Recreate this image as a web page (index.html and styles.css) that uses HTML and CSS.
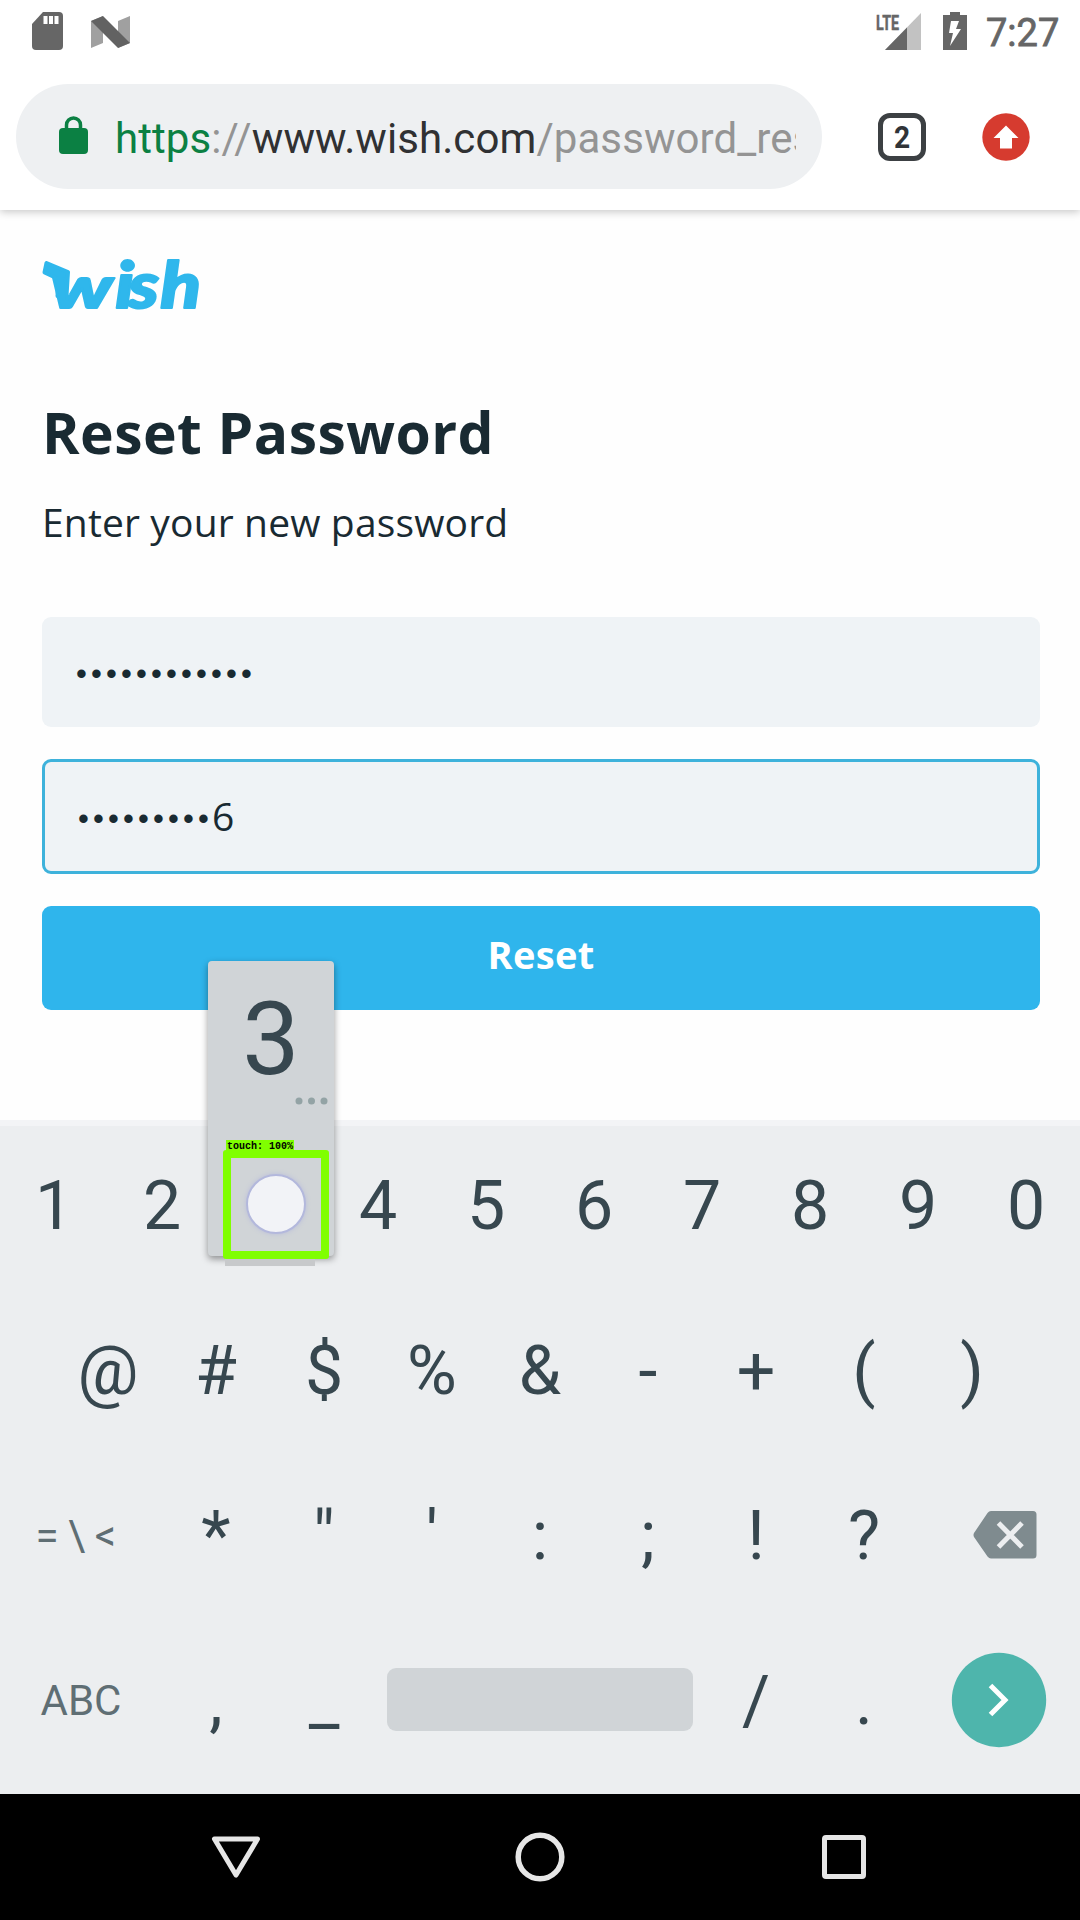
FILE: index.html
```html
<!DOCTYPE html>
<html lang="en">
<head>
<meta charset="utf-8">
<title>Reset Password</title>
<link rel="stylesheet" href="styles.css">
</head>
<body>
<div class="phone">
  <header class="browser">
    <div class="status">
      <svg class="sd" width="31" height="38" viewBox="0 0 31 38"><path d="M11 0H27a4 4 0 0 1 4 4V34a4 4 0 0 1-4 4H4a4 4 0 0 1-4-4V12Z" fill="#666"/><path d="M11.500 4h4v8h-4zM17 4h4v8h-4zM22.500 4h4v8h-4z" fill="#fff"/></svg>
      <svg class="nougat" width="39" height="32" viewBox="0 0 39 32"><path d="M0 5L12 0V27L0 32ZM27 5L39 0V27L27 32Z" fill="#a0a0a0"/><path d="M0 5L12 0L39 27L27 32Z" fill="#626262"/></svg>
      <svg class="signal" width="46" height="38" viewBox="0 0 46 38"><path d="M45 0V37H9Z" fill="#c2c2c2"/><path d="M31 14.500V37H9Z" fill="#666"/><text x="0" y="16.500" textLength="23" lengthAdjust="spacingAndGlyphs" class="lte">LTE</text></svg>
      <svg class="battery" width="24" height="38" viewBox="0 0 24 38"><path d="M7 0H17V3H24V38H0V3H7Z" fill="#666"/><path d="M8 9H16L13 17H18L7 34L10 21H6Z" fill="#fff"/></svg>
      <span class="clock">7:27</span>
    </div>
    <div class="toolbar">
      <div class="omnibox">
        <svg class="lock" width="29" height="38" viewBox="0 0 29 38"><rect y="12" width="29" height="26" rx="4" fill="#0b8043"/><path d="M7.500 14V9a7 7 0 0 1 14 0V14" fill="none" stroke="#0b8043" stroke-width="3.500"/></svg>
        <div class="url"><span class="scheme">https</span>://<span class="host">www.wish.com</span>/password_res</div>
      </div>
      <div class="tabs"><span>2</span></div>
      <svg class="update" width="48" height="48" viewBox="0 0 48 48"><circle cx="24" cy="24" r="23.700" fill="#d63b2f"/><path d="M24 12.500L36.500 25H30V35.500H18V25H11.500Z" fill="#fff"/></svg>
    </div>
  </header>

  <main class="page">
    <svg class="logo" width="160" height="56" viewBox="0 0 160 56"><path d="M4.500 7L26 16L24.500 40H15.500L16.500 23L2.500 16.500Z" fill="#2fb7ec" stroke="#2fb7ec" stroke-width="4" stroke-linejoin="round"/><g class="wordmark"><text transform="translate(9 52) scale(1.28 .88)">w</text><text transform="translate(2 52) scale(1.15 1)" x="62 73.500 101">ish</text></g></svg>
    <h1>Reset Password</h1>
    <p class="lead">Enter your new password</p>
    <form class="form">
      <div class="field"><span class="mask">••••••••••••</span></div>
      <div class="field focused"><span class="mask">•••••••••</span><span class="digit">6</span></div>
      <div class="submit">Reset</div>
    </form>
  </main>

  <section class="keyboard">
    <div class="row"><b>1</b><b>2</b><b></b><b>4</b><b>5</b><b>6</b><b>7</b><b>8</b><b>9</b><b>0</b></div>
    <div class="row inset"><b>@</b><b>#</b><b>$</b><b>%</b><b>&amp;</b><b>-</b><b>+</b><b>(</b><b>)</b></div>
    <div class="row"><b class="wide mode symbols">=\&lt;</b><b>*</b><b>"</b><b>'</b><b>:</b><b>;</b><b>!</b><b>?</b>
      <b class="wide back"><svg width="64" height="48" viewBox="0 0 64 48"><path d="M18 0H60a3.500 3.500 0 0 1 3.500 3.500V44a3.500 3.500 0 0 1-3.500 3.500H18Q16 47.500 14.500 45.500L1 26Q0 24 1 22L14.500 2Q16 0 18 0Z" fill="#7f8b8f"/><path d="M25.500 12L49 36M49 12L25.500 36" stroke="#eceef0" stroke-width="5"/></svg></b></div>
    <div class="row"><b class="wide mode">ABC</b><b>,</b><b>_</b><b class="space"><i></i></b><b>/</b><b>.</b>
      <b class="wide enter"><svg width="96" height="96" viewBox="0 0 96 96"><circle cx="48" cy="48" r="47.200" fill="#4eb5ac"/><path d="M39.500 33.500L54 48L39.500 62.500" fill="none" stroke="#fff" stroke-width="5"/></svg></b></div>

    <div class="popup"><span>3</span><svg class="more" width="34" height="8" viewBox="0 0 34 8"><g fill="#93a3a5"><circle cx="4" cy="4" r="3.500"/><circle cx="16.500" cy="4" r="3.500"/><circle cx="29" cy="4" r="3.500"/></g></svg></div>
    <div class="trace"></div>
    <div class="target"><div class="finger"></div></div>
    <div class="tag">touch: 100%</div>
  </section>

  <nav class="nav">
    <svg width="50" height="50" viewBox="0 0 50 50"><path d="M3.500 7H46.500L25 43Z" fill="none" stroke="#e6e6e6" stroke-width="5" stroke-linejoin="round"/></svg>
    <svg width="50" height="50" viewBox="0 0 50 50"><circle cx="25" cy="25" r="21.800" fill="none" stroke="#e6e6e6" stroke-width="5.500"/></svg>
    <svg width="50" height="50" viewBox="0 0 50 50"><rect x="5.500" y="5.500" width="39" height="39" rx="1.500" fill="none" stroke="#e6e6e6" stroke-width="5"/></svg>
  </nav>
</div>
</body>
</html>
```
FILE: styles.css
```css
* { box-sizing: border-box; }
body { margin: 0; font-family: Roboto, "Liberation Sans", sans-serif; }
.phone { width: 1080px; height: 1920px; display: flex; flex-direction: column; background: #fefefe; overflow: hidden; }

.browser { height: 210px; flex: none; background: #fff; position: relative; z-index: 1; box-shadow: 0 2px 8px rgba(0,0,0,.22); }
.status { height: 84px; padding: 12px 22px 0 32px; display: flex; align-items: flex-start; }
.nougat { margin: 4px 0 0 28px; }
.signal { margin: 1px 0 0 auto; overflow: visible; }
.lte { font: 700 21px Roboto, sans-serif; fill: #666; stroke: #666; stroke-width: .5px; }
.battery { margin-left: 21px; }
.clock { margin-left: 19px; width: 72px; font-size: 38px; line-height: 43px; color: #666; -webkit-text-stroke: .8px #666; white-space: nowrap; }

.toolbar { display: flex; align-items: center; padding-left: 16px; height: 105px; }
.omnibox { width: 806px; height: 105px; border-radius: 53px; background: #eef0f2; display: flex; align-items: center; padding: 0 26px 0 43px; }
.lock { flex: none; margin: -3px 27px 0 0; }
.url { flex: 1; min-width: 0; overflow: hidden; white-space: nowrap; font-size: 42px; line-height: 60px; margin-top: 4px; color: #949494; letter-spacing: .08px; }
.scheme { color: #0b8043; }
.host { color: #303133; }
.tabs { margin-left: 56px; width: 48px; height: 48px; border: 5px solid #3c4043; border-radius: 12px; font-size: 32px; line-height: 38px; font-weight: 700; text-align: center; color: #303438; }
.tabs span { display: inline-block; transform: scaleX(.88); }
.update { margin-left: 56px; }

.page { height: 910px; flex: none; padding: 46px 40px 0 42px; font-family: "Open Sans", "Noto Sans", sans-serif; color: #192a32; }
.logo { display: block; overflow: visible; }
.wordmark { font: italic 900 65px Lato, sans-serif; fill: #2fb7ec; stroke: #2fb7ec; stroke-width: 2px; stroke-linejoin: round; }
h1 { margin: 85px 0 0; font-size: 57px; line-height: 70px; font-weight: 700; letter-spacing: .45px; white-space: nowrap; }
.lead { margin: 30px 0 0; font-size: 39px; line-height: 50px; letter-spacing: .15px; white-space: nowrap; }
.form { margin-top: 70px; display: flex; flex-direction: column; }
.field { height: 110px; border-radius: 9px; background: #eff3f6; display: flex; align-items: center; padding-left: 34px; }
.mask { font: 31px/40px "Liberation Sans", sans-serif; letter-spacing: 4.150px; padding-top: 4px; }
.focused { margin-top: 32px; height: 115px; border: 3px solid #3eb2db; padding-left: 33px; }
.digit { font-size: 39px; line-height: 50px; margin: -2px 0 0 -1px; }
.submit { margin-top: 32px; height: 104px; border-radius: 9px; background: #2fb5ec; color: #fff; font-size: 38px; font-weight: 700; line-height: 97px; letter-spacing: .3px; text-align: center; }

.keyboard { position: relative; height: 674px; flex: none; background: #eceef0; border-top: 6px solid #f3f4f6; }
.row { height: 165px; display: flex; }
.row:first-child { margin-top: -2px; }
.inset { padding: 0 54px; }
.row b { width: 108px; height: 165px; flex: none; font-weight: 400; font-size: 68px; line-height: 165px; text-align: center; color: #37474f; }
.row .wide { width: 162px; }
.row .mode { font-size: 42px; line-height: 163px; color: #5f6e74; }
.row .symbols { letter-spacing: 9.500px; padding-right: 1px; }
.row .back, .row .enter, .row .space { display: flex; align-items: center; justify-content: center; }
.row .back { padding: 0 0 4px 11px; }
.enter svg { margin-top: -4px; }
.row .space { width: 324px; }
.space i { width: 306px; height: 63px; border-radius: 9px; background: #d0d4d7; margin-top: -4px; }

.popup { position: absolute; left: 208px; top: -165px; width: 126px; height: 295px; border-radius: 4px; background: #d0d4d7; box-shadow: 0 3px 7px rgba(0,0,0,.4); text-align: center; font-size: 102px; line-height: 156px; color: #37474f; }
.more { position: absolute; left: 87px; top: 136px; }
.trace { position: absolute; left: 225px; top: 132px; width: 90px; height: 8px; background: #c7c9cb; }
.target { position: absolute; left: 223px; top: 24px; width: 106px; height: 109px; border: 8px solid #80ff00; border-radius: 3px; }
.finger { position: absolute; left: 15px; top: 16px; width: 60px; height: 60px; border-radius: 50%; border: 2px solid #b3b8dc; background: #f2f3f7; box-shadow: 0 0 5px #b9bddb; }
.tag { position: absolute; left: 226px; top: 14px; width: 68px; height: 12px; background: #80ff00; color: #000; font: 700 10px/14px "Liberation Mono", monospace; text-align: center; white-space: nowrap; }

.nav { height: 126px; flex: none; background: #000; display: flex; align-items: center; justify-content: space-between; padding: 0 211px; }
```
